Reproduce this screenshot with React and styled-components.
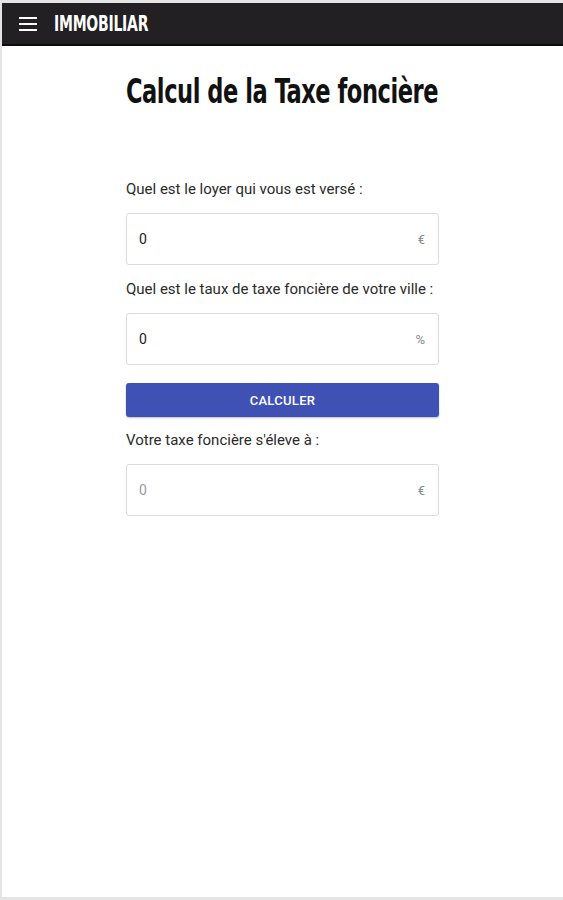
import React from 'react'
import styled, { createGlobalStyle } from 'styled-components'

const GlobalStyle = createGlobalStyle`
html, body {
  margin: 0;
  padding: 0;
  background: #ffffff;
}
body {
  font-family: Roboto, "Liberation Sans", sans-serif;
  color: #212121;
}
`;

const Frame = styled.div`
box-sizing: border-box;
width: 563px;
height: 900px;
border-top: 3px solid #e4e4e4;
border-left: 2px solid #e4e4e4;
border-bottom: 3px solid #e4e4e4;
display: flex;
flex-direction: column;
overflow: hidden;
`;

const TopBar = styled.header`
height: 41px;
background-color: #222022;
border-bottom: 2px solid #0c0c0c;
display: flex;
align-items: center;
padding-left: 17px;
gap: 17px;
`;

const Burger = styled.button`
width: 18px;
height: 14px;
padding: 0;
border: none;
background: transparent;
display: flex;
flex-direction: column;
justify-content: space-between;

span {
  display: block;
  height: 2px;
  background: #ffffff;
}
`;

// no condensed display face installed: squeeze a bold sans horizontally
const Brand = styled.div`
font-family: "DejaVu Sans Condensed", "DejaVu Sans", sans-serif;
font-stretch: condensed;
font-weight: 700;
font-size: 21px;
color: #ffffff;
letter-spacing: -0.3px;
transform: scaleX(0.74);
transform-origin: left center;
`;

const Main = styled.main`
width: 313px;
margin: 0 auto;
padding-top: 27px;
display: flex;
flex-direction: column;
`;

const Title = styled.h1`
margin: 0 0 68px 0;
font-family: "DejaVu Sans Condensed", "DejaVu Sans", sans-serif;
font-stretch: condensed;
font-weight: 700;
font-size: 33px;
line-height: 38px;
color: #111111;
white-space: nowrap;
letter-spacing: -0.6px;
transform: scaleX(0.76);
transform-origin: left center;
`;

const Label = styled.label`
display: block;
font-size: 15px;
line-height: 20px;
color: #2a2a2a;
margin-bottom: 14px;
`;

const Field = styled.div`
box-sizing: border-box;
height: 52px;
border: 1px solid #dcdcdc;
border-radius: 3px;
display: flex;
align-items: center;
padding: 0 13px 0 12px;
margin-bottom: ${p => p.$gap}px;
font-size: 14px;
`;

const Value = styled.span`
flex: 1;
color: ${p => (p.$muted ? '#9a9a9a' : '#1a1a1a')};
`;

const Unit = styled.span`
color: #8a8a8a;
font-size: 13px;
`;

const Button = styled.button`
height: 34px;
border: none;
border-radius: 3px;
background-color: #3f51b5;
color: #ffffff;
font-family: Roboto, "Liberation Sans", sans-serif;
font-weight: 500;
font-size: 13px;
letter-spacing: 0.3px;
margin-bottom: 13px;
box-shadow: 0 1px 2px rgba(0, 0, 0, 0.25);
`;

export default function App() {
    return (
        <Frame>
            <GlobalStyle />
            <TopBar>
                <Burger aria-label="menu">
                    <span />
                    <span />
                    <span />
                </Burger>
                <Brand>IMMOBILIAR</Brand>
            </TopBar>
            <Main>
                <Title>Calcul de la Taxe foncière</Title>

                <Label>Quel est le loyer qui vous est versé :</Label>
                <Field $gap={14}>
                    <Value>0</Value>
                    <Unit>€</Unit>
                </Field>

                <Label>Quel est le taux de taxe foncière de votre ville :</Label>
                <Field $gap={18}>
                    <Value>0</Value>
                    <Unit>%</Unit>
                </Field>

                <Button>CALCULER</Button>

                <Label>Votre taxe foncière s'éleve à :</Label>
                <Field $gap={0}>
                    <Value $muted>0</Value>
                    <Unit>€</Unit>
                </Field>
            </Main>
        </Frame>
    )
}
